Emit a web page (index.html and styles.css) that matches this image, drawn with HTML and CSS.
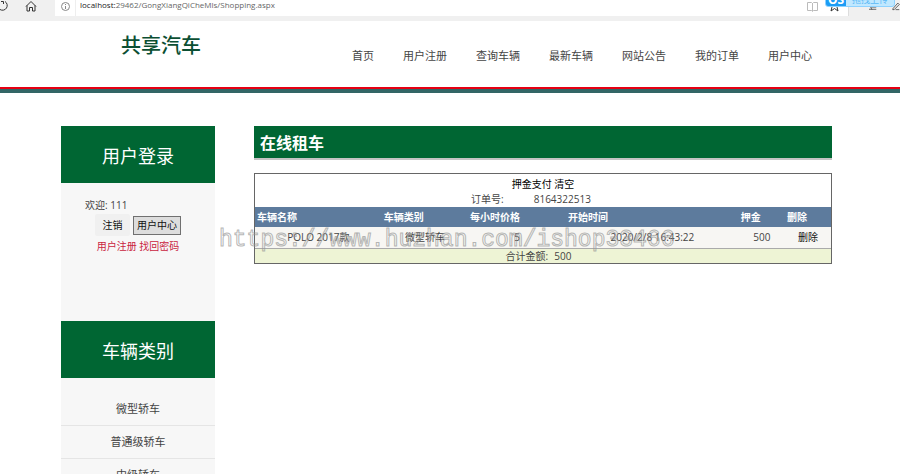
FILE: index.html
```html
<!DOCTYPE html>
<html lang="zh-CN">
<head>
	<meta charset="utf-8">
	<title>共享汽车</title>
	<link rel="stylesheet" href="styles.css">
</head>
<body>
	<div class="browser">
		<div class="tools">
			<svg class="reload" width="10" height="12" viewBox="0 0 10 12"><path d="M1 1.500h2.500v2.500M5 1.500a4.500 4.500 0 1 1-5 8"/></svg>
			<svg class="home" width="12" height="12" viewBox="0 0 12 12"><path d="M1 6.500 6 1.500l5 5M2 5.500v5.500h2.500V7.500h3V11H10V5.500"/></svg>
		</div>
		<div class="address">
			<svg class="info" width="9" height="9" viewBox="0 0 9 9"><circle cx="4.500" cy="4.500" r="4"/><path d="M4.500 4v3M4.500 2v1"/></svg>
			<div class="url"><b>localhost:</b>29462/GongXiangQiCheMls/Shopping.aspx</div>
			<svg class="book" width="11" height="10" viewBox="0 0 11 10"><path d="M5.500 1v8M.5.5h4l1 1 1-1h4v8h-4l-1 1-1-1h-4z"/></svg>
			<svg class="star" width="11" height="12" viewBox="0 0 11 12"><path d="M5.500 1 7 4.500h3.500L8 7l1 4-3.500-2.500L2 11l1-4L.5 4.500H4z"/></svg>
		</div>
		<div class="actions">
			<svg width="11" height="12" viewBox="0 0 11 12"><path d="M0 10.500h4M3 7.500h7M4 10.500h6M2 7l2 4"/></svg>
			<svg width="11" height="12" viewBox="0 0 11 12"><path d="M1 10 8 2l2 2-7 7H1zM5 11h5"/></svg>
		</div>
		<div class="upload"><span class="upload-logo">OS</span><span class="upload-text">拖拽上传</span></div>
	</div>

	<header class="header">
		<div class="logo">共享汽车</div>
		<nav class="nav">
			<a href="#">首页</a>
			<a href="#">用户注册</a>
			<a href="#">查询车辆</a>
			<a href="#">最新车辆</a>
			<a href="#">网站公告</a>
			<a href="#">我的订单</a>
			<a href="#">用户中心</a>
		</nav>
	</header>

	<div class="container">
		<aside class="sidebar">
			<h2 class="side-title">用户登录</h2>
			<div class="login">
				<div class="welcome">欢迎: 111</div>
				<div class="buttons">
					<button type="button" class="logout">注销</button>
					<button type="button" class="center">用户中心</button>
				</div>
				<div class="links"><a href="#">用户注册</a> <a href="#">找回密码</a></div>
			</div>
			<h2 class="side-title">车辆类别</h2>
			<ul class="types">
				<li><a href="#">微型轿车</a></li>
				<li><a href="#">普通级轿车</a></li>
				<li><a href="#">中级轿车</a></li>
			</ul>
		</aside>

		<main class="main">
			<h1 class="title">在线租车</h1>
			<div class="order">
				<div class="order-links"><a href="#">押金支付</a> <a href="#">清空</a></div>
				<div class="order-no"><span>订单号:</span><span>8164322513</span></div>
				<table class="cart">
					<colgroup>
						<col class="col-name"><col class="col-type"><col class="col-price"><col class="col-time"><col class="col-money"><col class="col-del">
					</colgroup>
					<thead>
						<tr><th>车辆名称</th><th>车辆类别</th><th>每小时价格</th><th>开始时间</th><th>押金</th><th>删除</th></tr>
					</thead>
					<tbody>
						<tr><td>POLO 2017款</td><td>微型轿车</td><td>5</td><td>2020/2/8 16:43:22</td><td>500</td><td><a href="#">删除</a></td></tr>
					</tbody>
				</table>
				<div class="total"><span>合计金额:</span><span>500</span></div>
			</div>
		</main>
	</div>

	<div class="watermark">https://www.huzhan.com/ishop33466</div>
</body>
</html>
```
FILE: styles.css
```css
* {
	box-sizing: border-box;
}

html {
	overflow: hidden;
}

body {
	margin: 0;
	height: 100vh;
	overflow: hidden;
	background: #fff;
	color: #444;
	font: 11px/16px "Open Sans", "Noto Sans CJK SC", sans-serif;
}

a {
	color: inherit;
	text-decoration: none;
}

ul {
	margin: 0;
	padding: 0;
	list-style: none;
}

svg {
	fill: none;
	stroke: #333;
}

/* 浏览器地址栏 */
.browser {
	position: relative;
	display: flex;
	height: 21px;
	padding-bottom: 5px;
	background: #f0f0f0;
}

.tools {
	display: flex;
	gap: 15px;
	width: 55px;
}

.address {
	flex: 1;
	display: flex;
	align-items: flex-start;
	padding-left: 6px;
	background: #fff;
}

.info {
	margin-top: 2px;
	stroke: #888;
}

.url {
	flex: 1;
	height: 16px;
	margin-left: 5px;
	padding-left: 4px;
	border-left: 1px solid #eee;
	color: #666;
	font-size: 8px;
	line-height: 10px;
}

.url b {
	color: #222;
	font-weight: 400;
}

.book {
	margin: 2px 11px 0 0;
	stroke: #bbb;
}

.star {
	margin-right: 8px;
}

.actions {
	display: flex;
	gap: 15px;
	width: 52px;
	padding-left: 20px;
	border-left: 1px solid #ddd;
}

.upload {
	position: absolute;
	top: -8px;
	right: 5px;
	display: flex;
	width: 70px;
	height: 15px;
	overflow: hidden;
	border: 1px solid #8ed2ff;
	border-radius: 3px;
	background: #c0e8ff;
	color: #5cb9f5;
	font-size: 9px;
	line-height: 14px;
}

.upload-logo {
	width: 20px;
	background: #1c9cf5;
	color: #fff;
	font-size: 12px;
	font-weight: 700;
	text-align: center;
}

.upload-text {
	flex: 1;
	text-align: center;
}

/* 头部 */
.header {
	display: flex;
	height: 72px;
	padding-left: 121px;
	border-bottom: 4px solid #366;
	box-shadow: inset 0 -2px #e60012;
}

.logo {
	width: 231px;
	padding-top: 8px;
	color: #0b4f33;
	font-size: 20px;
	font-weight: 500;
	line-height: 34px;
}

.nav {
	display: flex;
	gap: 29px;
	padding-top: 27px;
}

/* 内容 */
.container {
	display: flex;
	gap: 39px;
	margin: 33px 68px 0 61px;
}

.sidebar {
	width: 154px;
	background: #f7f7f7;
}

.side-title {
	margin: 0;
	padding-top: 3px;
	background: #063;
	color: #fff;
	font-size: 18px;
	font-weight: 400;
	line-height: 54px;
	text-align: center;
}

.login {
	height: 138px;
	padding-top: 14px;
	font-size: 10px;
}

.welcome {
	padding-left: 24px;
}

.buttons {
	display: flex;
	align-items: center;
	justify-content: center;
	gap: 3px;
	height: 24px;
}

.buttons button {
	padding: 0;
	color: #111;
	font: inherit;
}

.logout {
	width: 35px;
	height: 22px;
	border: 0;
	border-radius: 2px;
	background: #f0f0f0;
}

.center {
	width: 48px;
	height: 19px;
	border: 1px solid #707070;
	background: #ddd;
}

.links {
	padding-top: 1px;
	color: #c9243f;
	text-align: center;
}

.types {
	padding-top: 15px;
}

.types li {
	height: 33px;
	border-bottom: 1px solid #e5e5e5;
	line-height: 32px;
	text-align: center;
}

.main {
	flex: 1;
}

.title {
	margin: 0;
	padding: 3px 0 0 6px;
	border-bottom: 2px solid #c4c4c4;
	background: #063;
	color: #fff;
	font-size: 16px;
	line-height: 29px;
}

.order {
	margin-top: 13px;
	border: 1px solid #666;
	font-size: 10px;
}

.order-links {
	padding-top: 2px;
	color: #000;
	text-align: center;
}

.order-no {
	display: flex;
	justify-content: center;
	gap: 30px;
	height: 15px;
	padding-right: 24px;
	line-height: 15px;
}

.cart {
	width: 100%;
	border-collapse: collapse;
	table-layout: fixed;
}

.cart th {
	height: 20px;
	padding: 0 2px;
	background: #5d7b9d;
	color: #fff;
	text-align: left;
}

.cart td {
	height: 21px;
	padding: 0;
	border-bottom: 1px solid #aaa;
	background: #f7f6f3;
	text-align: center;
}

.cart td a {
	color: #111;
}

.col-name {
	width: 22%;
}

.col-type {
	width: 15%;
}

.col-price {
	width: 17%;
}

.col-time {
	width: 30%;
}

.col-money {
	width: 8%;
}

.total {
	display: flex;
	justify-content: center;
	gap: 6px;
	height: 14px;
	padding-right: 9px;
	background: #eef4d5;
	line-height: 14px;
}

/* 水印 */
.watermark {
	position: absolute;
	top: 226px;
	left: 219px;
	color: transparent;
	font: 23px/28px "Liberation Mono", monospace;
	-webkit-text-stroke: 1px rgba(150, 150, 150, .7);
	pointer-events: none;
}
```
